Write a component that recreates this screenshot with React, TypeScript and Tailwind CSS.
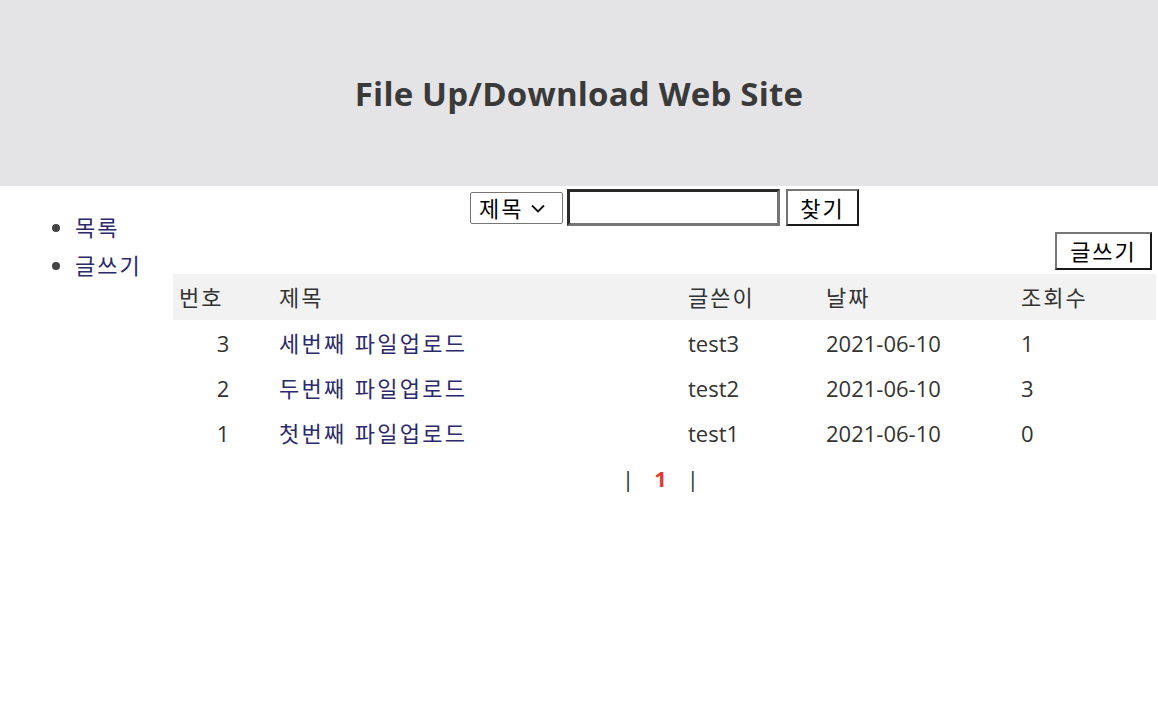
import React from 'react';

const posts = [
  { no: 3, title: '세번째 파일업로드', writer: 'test3', date: '2021-06-10', hit: 1 },
  { no: 2, title: '두번째 파일업로드', writer: 'test2', date: '2021-06-10', hit: 3 },
  { no: 1, title: '첫번째 파일업로드', writer: 'test1', date: '2021-06-10', hit: 0 },
];

const font = { fontFamily: '"Open Sans", "Noto Sans CJK KR", sans-serif' };

export default function App() {
  return (
    <div className="w-[1158px] h-[724px] bg-white text-[#333] text-[22px] leading-none" style={font}>
      {/* header */}
      <header className="h-[186px] bg-[#e4e4e7] flex items-center justify-center">
        <h1 className="text-[33px] font-bold text-[#3a3a3a] tracking-[0.2px]">File Up/Download Web Site</h1>
      </header>

      <div className="flex">
        {/* side menu */}
        <nav className="w-[173px] shrink-0">
          <ul className="list-disc pl-[75px] pt-[22px] marker:text-[#444] tracking-[2px]">
            <li className="h-[38px] leading-[38px]">
              <a href="#" className="text-[#2c2a6a]">목록</a>
            </li>
            <li className="h-[38px] leading-[38px]">
              <a href="#" className="text-[#2c2a6a]">글쓰기</a>
            </li>
          </ul>
        </nav>

        {/* content */}
        <main className="flex-1 pr-[2px]">
          <form className="flex justify-center items-center gap-[4px] pt-[3px]" onSubmit={e => e.preventDefault()}>
            <div className="w-[93px] h-[32px] border border-[#767676] rounded-[2px] flex items-center pl-[8px] gap-[6px] text-black">
              <span className="tracking-[2px]">제목</span>
              <svg width="18" height="18" viewBox="0 0 18 18" className="mt-[1px]">
                <path d="M3 6.5l6 6 6-6" fill="none" stroke="#111" strokeWidth="1.8" />
              </svg>
            </div>
            <input
              className="w-[213px] h-[37px] border-[3px] border-t-[#2b2b2b] border-l-[#2b2b2b] border-b-[#767676] border-r-[#767676] outline-none"
            />
            <button className="ml-[2px] w-[73px] h-[37px] border-2 border-t-[#767676] border-l-[#767676] border-b-[#1a1a1a] border-r-[#1a1a1a] bg-white text-black tracking-[2px]">
              찾기
            </button>
          </form>

          <div className="flex justify-end pt-[6px] pr-[4px]">
            <button className="w-[97px] h-[38px] border-2 border-t-[#767676] border-l-[#767676] border-b-[#1a1a1a] border-r-[#1a1a1a] bg-white text-black tracking-[2px]">
              글쓰기
            </button>
          </div>

          <table className="w-full mt-[4px] border-collapse">
            <thead>
              <tr className="bg-[#f2f2f2] h-[46px] tracking-[2px]">
                <th className="w-[100px] text-left font-normal pl-[6px]">번호</th>
                <th className="w-[409px] text-left font-normal pl-[6px]">제목</th>
                <th className="w-[138px] text-left font-normal pl-[6px]">글쓴이</th>
                <th className="w-[195px] text-left font-normal pl-[6px]">날짜</th>
                <th className="text-left font-normal pl-[6px]">조회수</th>
              </tr>
            </thead>
            <tbody>
              {posts.map(p => (
                <tr key={p.no} className="h-[45px]">
                  <td className="text-center">{p.no}</td>
                  <td className="pl-[6px]">
                    <a href="#" className="text-[#2c2a6a] tracking-[2.3px]">{p.title}</a>
                  </td>
                  <td className="pl-[6px]">{p.writer}</td>
                  <td className="pl-[6px]">{p.date}</td>
                  <td className="pl-[6px]">{p.hit}</td>
                </tr>
              ))}
            </tbody>
          </table>

          <div className="flex justify-center items-center gap-[20px] pt-[12px] pr-[8px] text-[#333]">
            <span>|</span>
            <span className="font-bold text-[#e53935]">1</span>
            <span>|</span>
          </div>
        </main>
      </div>
    </div>
  );
}
